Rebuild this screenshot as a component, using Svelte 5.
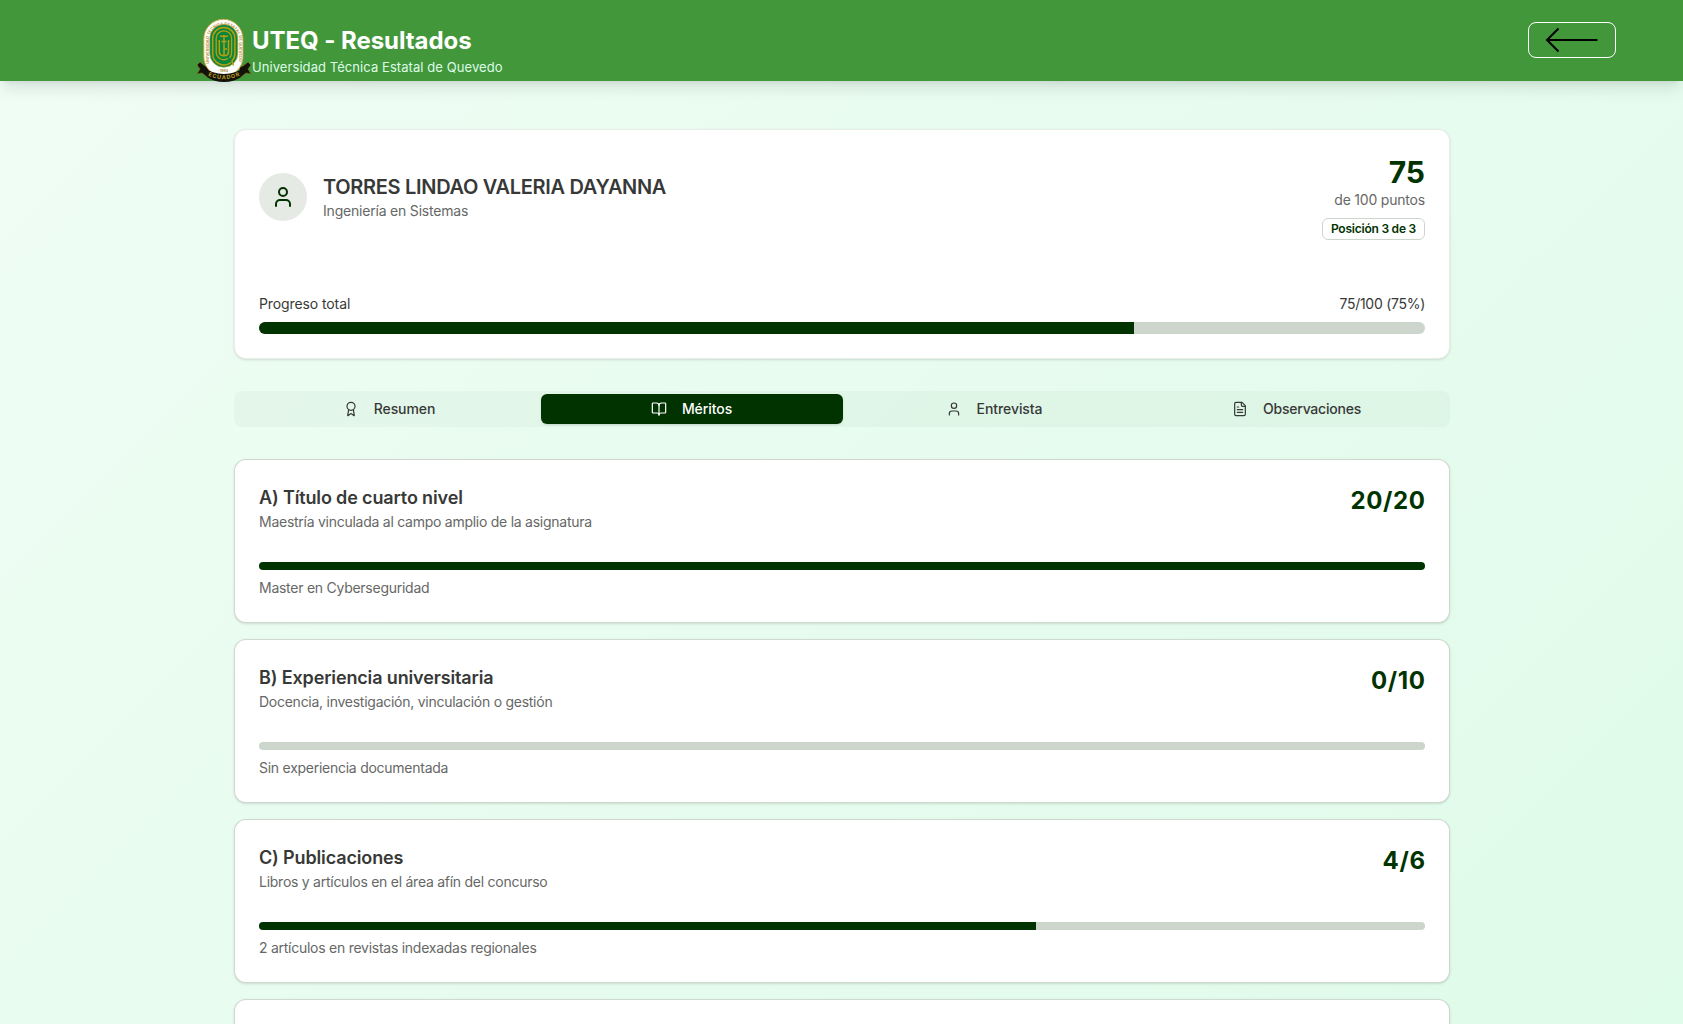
<script>
  const tabs = [
    { label: 'Resumen', icon: 'award' },
    { label: 'Méritos', icon: 'book', active: true },
    { label: 'Entrevista', icon: 'user' },
    { label: 'Observaciones', icon: 'file' }
  ];
  const merits = [
    { title: 'A) Título de cuarto nivel', sub: 'Maestría vinculada al campo amplio de la asignatura', score: 20, max: 20, note: 'Master en Cyberseguridad' },
    { title: 'B) Experiencia universitaria', sub: 'Docencia, investigación, vinculación o gestión', score: 0, max: 10, note: 'Sin experiencia documentada' },
    { title: 'C) Publicaciones', sub: 'Libros y artículos en el área afín del concurso', score: 4, max: 6, note: '2 artículos en revistas indexadas regionales' }
  ];
</script>

{#snippet icon(name, size)}
  <svg class="icon" width={size} height={size} viewBox="0 0 24 24">
    {#if name === 'award'}
      <path d="m15.477 12.89 1.515 8.526a.5.5 0 0 1-.81.47l-3.58-2.687a1 1 0 0 0-1.197 0l-3.586 2.686a.5.5 0 0 1-.81-.469l1.514-8.526" />
      <circle cx="12" cy="8" r="6" />
    {:else if name === 'book'}
      <path d="M12 7v14" />
      <path d="M3 18a1 1 0 0 1-1-1V4a1 1 0 0 1 1-1h5a4 4 0 0 1 4 4 4 4 0 0 1 4-4h5a1 1 0 0 1 1 1v13a1 1 0 0 1-1 1h-6a3 3 0 0 0-3 3 3 3 0 0 0-3-3z" />
    {:else if name === 'user'}
      <path d="M19 21v-2a4 4 0 0 0-4-4H9a4 4 0 0 0-4 4v2" />
      <circle cx="12" cy="7" r="4" />
    {:else}
      <path d="M15 2H6a2 2 0 0 0-2 2v16a2 2 0 0 0 2 2h12a2 2 0 0 0 2-2V7Z" />
      <path d="M14 2v4a2 2 0 0 0 2 2h4M10 9H8M16 13H8M16 17H8" />
    {/if}
  </svg>
{/snippet}

<div class="page">
  <header>
    <div class="brand">
      <svg class="crest" width="54" height="64" viewBox="0 0 54 64">
        <defs>
          <path id="ring" d="M11.600 46V22.500a15.400 15.400 0 0 1 30.800 0V46" />
          <path id="ribbon" d="M11 57.500Q27 64.800 43 57.500" />
        </defs>
        <path d="M3 44 8 48 12 49 10 59 5 55 0 56 3 51 0 47ZM51 44 46 48 42 49 44 59 49 55 54 56 51 51 54 47Z" fill="#14130a" stroke="#8c7414" stroke-width=".6" />
        <rect x="6.800" y="1.300" width="39.200" height="57" rx="19.600" fill="#fff" stroke="#c9a53f" stroke-width=".9" />
        <rect x="12.800" y="6.300" width="28" height="43" rx="14" fill="#08873c" stroke="#c9a53f" stroke-width=".7" />
        <text class="ring-text"><textPath href="#ring" textLength="93">UNIVERSIDAD TECNICA ESTATAL DE QUEVEDO</textPath></text>
        <g fill="none" stroke="#bb9c12" stroke-width="1.500">
          <path d="M34 44.500A11.300 11.300 0 0 1 15.700 35.500V20.500a11.100 11.100 0 0 1 22.200 0V35.500q0 4.500-3 7.500l1.500 4.500" />
          <path d="M31 40.500A7.700 7.700 0 0 1 19.200 34V20.500a7.700 7.700 0 0 1 15.400 0V34q0 4-2 6" stroke-width="1.300" />
          <path d="M22.300 22v11.500q0 4.300 4.600 4.300t4.600-4.300V22M27 17v21M23 18.300h8M24.500 23.500h5M27 31h3" />
        </g>
        <path d="M7 49.500Q15 56 27 56t20-6.500l-3 9.500q-7 5-17 5T10 59Z" fill="#14130a" />
        <text class="year" x="27" y="54.300">· 1984 ·</text>
        <text class="ribbon-text"><textPath href="#ribbon" textLength="33">ECUADOR</textPath></text>
      </svg>
      <div class="brand-text">
        <h1>UTEQ - Resultados</h1>
        <p>Universidad Técnica Estatal de Quevedo</p>
      </div>
    </div>
    <button class="back" aria-label="Volver">
      <svg width="54" height="26" viewBox="0 0 54 26"><path d="M52.500 13H2M13.500 1.500 2 13 13.500 24.500" /></svg>
    </button>
  </header>

  <main>
    <section class="card summary">
      <div class="row">
        <div class="person">
          <div class="avatar">{@render icon('user', 24)}</div>
          <div>
            <h2>TORRES LINDAO VALERIA DAYANNA</h2>
            <p class="muted career">Ingeniería en Sistemas</p>
          </div>
        </div>
        <div class="total">
          <strong>75</strong>
          <span class="muted">de 100 puntos</span>
          <span class="badge">Posición 3 de 3</span>
        </div>
      </div>
      <div class="progress-label"><span>Progreso total</span><span class="ratio">75/100 (75%)</span></div>
      <div class="bar thick"><div class="fill" style="width: 75%"></div></div>
    </section>

    <nav>
      {#each tabs as t}
        <button class="tab" class:active={t.active}>{@render icon(t.icon, 16)}<span>{t.label}</span></button>
      {/each}
    </nav>

    <div class="list">
      {#each merits as m}
        <section class="card merit">
          <div class="row">
            <div>
              <h3>{m.title}</h3>
              <p class="muted">{m.sub}</p>
            </div>
            <strong class="score">{m.score}/{m.max}</strong>
          </div>
          <div class="bar"><div class="fill" style="width: {(m.score / m.max) * 100}%"></div></div>
          <p class="muted">{m.note}</p>
        </section>
      {/each}
      <section class="card merit"></section>
    </div>
  </main>
</div>

<style>
  :global(body) { margin: 0; overflow: hidden; }
  .page { box-sizing: border-box; height: 1024px; overflow: hidden; font-family: Inter, sans-serif; color: #373937; background: linear-gradient(135deg, #f0fdf5, #dffbe9); }
  h1, h2, h3, p { margin: 0; }
  header { position: relative; box-sizing: border-box; height: 81px; padding: 0 67px 0 197px; display: flex; justify-content: space-between; background: #43973b; box-shadow: 0 10px 15px -3px #0000001a, 0 4px 6px -4px #0000001a; }
  .brand { display: flex; padding-top: 18px; }
  .crest { flex: none; }
  .crest text { font-family: Inter, sans-serif; font-weight: 700; }
  .ring-text { font-size: 4px; fill: #b99b4e; }
  .crest .year { font-size: 3.5px; fill: #a98b32; text-anchor: middle; }
  .ribbon-text { font-size: 5.5px; fill: #bd9e28; }
  .brand-text { padding-top: 7px; margin-left: 1px; }
  h1 { font-size: 24px; line-height: 32px; font-weight: 700; letter-spacing: -.06px; color: #fff; white-space: nowrap; }
  .brand-text p { font-size: 13px; line-height: 20px; letter-spacing: .07px; color: #dcfce7; white-space: nowrap; }
  .back { box-sizing: border-box; width: 88px; height: 36px; margin-top: 22px; padding: 0; border: 1px solid #fff; border-radius: 8px; background: none; display: flex; align-items: center; justify-content: center; }
  .back svg { fill: none; stroke: #000; stroke-width: 2; }
  main { width: 1216px; margin-left: 234px; padding-top: 48px; }
  .card { box-sizing: border-box; background: #fff; border: 1px solid #00330016; border-radius: 12px; padding: 24px; box-shadow: 0 1px 3px #0000001a, 0 1px 2px -1px #0000001a; }
  .row { display: flex; justify-content: space-between; }
  .summary { height: 230px; }
  .summary .row { height: 86px; align-items: center; margin-bottom: 54px; }
  .person { display: flex; gap: 16px; }
  .avatar { width: 48px; height: 48px; border-radius: 50%; background: #e5eae5; color: #003300; display: flex; align-items: center; justify-content: center; }
  .icon { flex: none; fill: none; stroke: currentColor; stroke-width: 2; stroke-linecap: round; stroke-linejoin: round; }
  h2 { font-size: 20px; line-height: 28px; font-weight: 600; letter-spacing: -.31px; }
  .muted { font-size: 14px; line-height: 20px; letter-spacing: -.26px; color: #666866; }
  .total { display: flex; flex-direction: column; align-items: flex-end; }
  .total strong { font-size: 30px; line-height: 36px; font-weight: 700; color: #003300; }
  .career, .total .muted { letter-spacing: -.2px; }
  .badge { box-sizing: border-box; height: 22px; margin-top: 8px; padding: 2px 8px; border: 1px solid #ccd6cc; border-radius: 6px; font-size: 12px; line-height: 16px; font-weight: 600; letter-spacing: -.22px; color: #003300; }
  .progress-label { display: flex; justify-content: space-between; font-size: 14px; line-height: 20px; letter-spacing: -.1px; margin-bottom: 8px; }
  .ratio { letter-spacing: -.28px; }
  .bar { height: 8px; border-radius: 99px; overflow: hidden; background: #ccd6cc; }
  .thick { height: 12px; }
  .fill { height: 100%; background: #003300; }
  nav { box-sizing: border-box; height: 36px; margin: 32px 0; padding: 3px 2px 3px 4px; border-radius: 8px; background: #00330008; display: grid; grid-template-columns: repeat(4, 1fr); }
  .tab { border: 0; padding: 0; border-radius: 6px; background: none; display: flex; align-items: center; justify-content: center; gap: 14.5px; font: 500 14px/20px Inter, sans-serif; letter-spacing: -.08px; color: #373937; }
  .tab:last-child { letter-spacing: -.22px; }
  .tab .icon { stroke-width: 1.8; }
  .tab.active { background: #003300; color: #fff; box-shadow: 0 1px 2px #00000020; }
  .list { display: flex; flex-direction: column; gap: 16px; }
  .merit { height: 164px; flex: none; border-color: #00330030; }
  h3 { font-size: 18px; line-height: 28px; font-weight: 600; letter-spacing: -.14px; }
  .score { padding-top: 1px; margin-right: -.65px; font-size: 24px; line-height: 32px; font-weight: 700; letter-spacing: .65px; color: #003300; }
  .merit .row { height: 48px; }
  .merit .bar { margin: 30px 0 8px; }
</style>
